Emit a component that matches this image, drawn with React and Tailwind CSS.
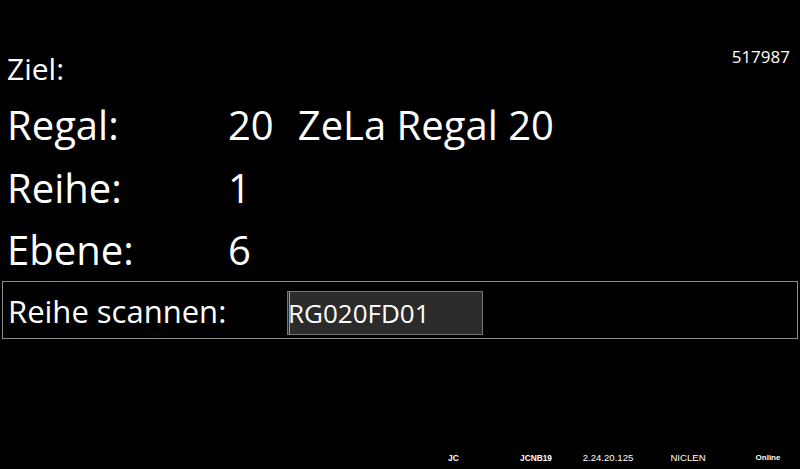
export default function App() {
  const font = { fontFamily: '"Open Sans", "Noto Sans", sans-serif' };
  return (
    <div className="w-[800px] h-[469px] bg-black text-white flex flex-col overflow-hidden" style={font}>
      <div className="pt-[48px] flex justify-between items-start">
        <div className="mt-[6px] pl-[7px] text-[30px] leading-[30px]">Ziel:</div>
        <div className="pr-[10px] text-[17px] leading-[17px]">517987</div>
      </div>

      <div className="mt-[21px] pl-[7px] flex text-[40px] leading-[40px]">
        <div className="w-[221px]">Regal:</div>
        <div className="flex gap-[24px]">
          <span>20</span>
          <span>ZeLa Regal 20</span>
        </div>
      </div>
      <div className="mt-[23px] pl-[7px] flex text-[40px] leading-[40px]">
        <div className="w-[221px]">Reihe:</div>
        <div>1</div>
      </div>
      <div className="mt-[22px] pl-[7px] flex text-[40px] leading-[40px]">
        <div className="w-[221px]">Ebene:</div>
        <div>6</div>
      </div>

      <div className="mt-[11px] mx-[2px] h-[58px] border border-[#8c8c8c] flex items-start pl-[5px]">
        <div className="mt-[14px] w-[279px] text-[31px] leading-[31px]">Reihe scannen:</div>
        <div className="relative mt-[9px] h-[44px] w-[196px] border border-[#747474] bg-[#2b2b2b] flex items-center text-[26px] leading-[26px]">
          <span>RG020FD01</span>
          <span className="absolute left-px top-0 bottom-0 w-px bg-[#9a9a9a]"></span>
        </div>
      </div>

      <div
        className="mt-auto h-[22px] flex items-center pl-[413px] text-white"
        style={{ fontFamily: '"Liberation Sans", Arial, sans-serif' }}
      >
        <div className="w-[81px] text-center text-[8.5px] font-bold">JC</div>
        <div className="w-[84px] text-center text-[8.3px] font-bold">JCNB19</div>
        <div className="w-[60px] text-center text-[9.6px]">2.24.20.125</div>
        <div className="w-[100px] text-center text-[9.6px]">NICLEN</div>
        <div className="w-[60px] text-center text-[8px] font-bold">Online</div>
      </div>
    </div>
  );
}
